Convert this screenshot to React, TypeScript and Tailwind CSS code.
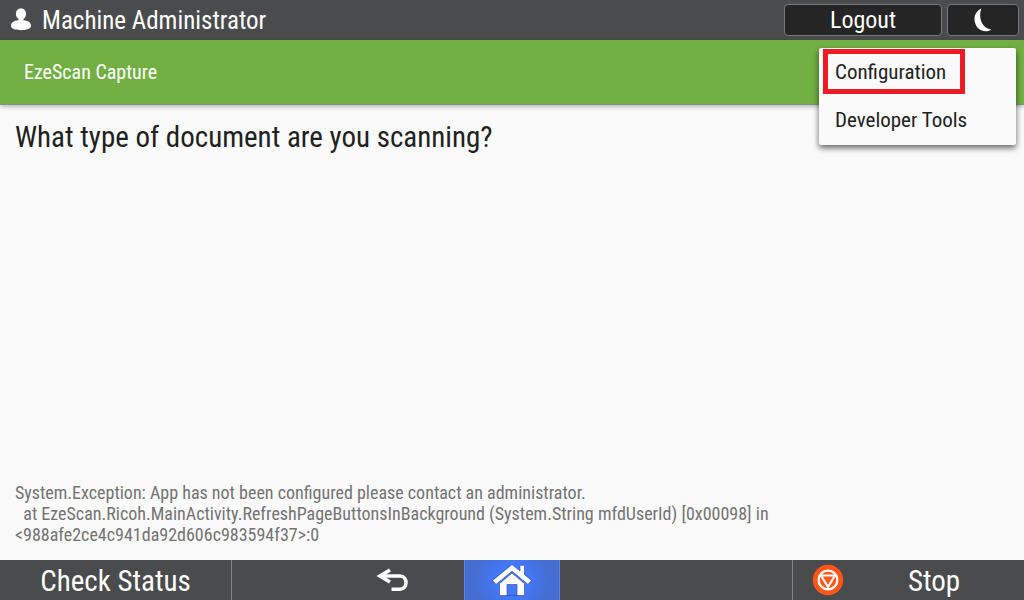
import React from "react";

const errorLines = [
  "System.Exception: App has not been configured please contact an administrator.",
  "  at EzeScan.Ricoh.MainActivity.RefreshPageButtonsInBackground (System.String mfdUserId) [0x00098] in",
  "<988afe2ce4c941da92d606c983594f37>:0",
];

function UserIcon() {
  return (
    <svg className="h-6 w-5" viewBox="0 0 20 24" fill="#ffffff" aria-hidden="true">
      <ellipse cx="10" cy="5.9" rx="5.1" ry="5.7" />
      <path d="M7.500 10h5v2.300c4.200.3 7.500 2 7.500 5.500 0 3-4.500 4.400-10 4.400S0 20.800 0 17.800c0-3.500 3.300-5.200 7.500-5.500z" />
    </svg>
  );
}

function MoonIcon() {
  return (
    <svg className="h-6 w-[18px]" viewBox="0 0 18 24" fill="#ffffff" aria-hidden="true">
      <path d="M7.500.5C3 2.500.5 6.500.5 11c0 7 4.700 12.200 11.500 12.200 2 0 4-.6 5.500-1.500-6.500-1.200-10.500-6.200-11.200-12.200C5.900 6 6.300 3 7.500.5z" />
    </svg>
  );
}

function BackIcon() {
  return (
    <svg className="h-6 w-8" viewBox="0 0 32 24" fill="none" stroke="#ffffff" strokeWidth="3.600" aria-hidden="true">
      <path d="M4.500 8H24c8 0 8 13.200 0 13.200h-8.500" />
      <path d="M14 2 4 8l10 6" />
    </svg>
  );
}

function HomeIcon() {
  return (
    <svg className="h-8 w-10" viewBox="0 0 40 32" aria-hidden="true">
      <g fill="#ffffff" stroke="#2850b8" strokeWidth="0.700" strokeLinejoin="round">
        <path d="M20 9 32.500 19.500v12h-25v-12z" />
        <path d="M15 20.500h10v11H15z" fill="#4677f5" />
        <path d="M20 .5 28 7V1.300h4.500v9.400l6.900 5.700-3.400 4L20 7.300 4 20.400.6 16.400z" />
      </g>
    </svg>
  );
}

function StopIcon() {
  return (
    <svg className="h-8 w-8" viewBox="0 0 32 32" aria-hidden="true">
      <circle cx="16" cy="16" r="15.200" fill="#ff5518" />
      <g fill="none" stroke="#ffffff" strokeWidth="2.200" strokeLinejoin="round">
        <circle cx="16" cy="16" r="9.400" />
        <path d="M9 11.500h14L16 23z" />
      </g>
    </svg>
  );
}

export default function App() {
  return (
    <div className="flex min-h-screen flex-col bg-[#fafafa] font-['Roboto_Condensed','Roboto',sans-serif] text-[#212121]">
      <header className="flex h-10 items-center bg-[#4a4b4c] pr-[5px] pl-[11px] text-white">
        <UserIcon />
        <span className="ml-[11px] flex-1 pt-0.5 text-[25px] leading-[38px]">Machine Administrator</span>
        <button className="h-8 w-[158px] rounded-[4px] border border-[#77787a] bg-[#252525] text-2xl leading-[30px]">
          Logout
        </button>
        <button
          aria-label="Sleep"
          className="ml-[5px] flex h-8 w-[72px] items-center justify-center rounded-[4px] border border-[#77787a] bg-[#252525]"
        >
          <MoonIcon />
        </button>
      </header>

      <div className="relative flex h-[65px] items-center border-b border-[#8b8f88] bg-[#72b043] px-6 shadow-[0_2px_4px_rgba(0,0,0,0.250)]">
        <h1 className="text-xl leading-8 text-white">EzeScan Capture</h1>
        <nav className="absolute top-2 right-2 flex w-[197px] flex-col rounded-[2px] bg-[#fafafa] text-[21px] leading-8 shadow-[0_3px_6px_rgba(0,0,0,0.600)]">
          <button className="mt-px ml-1 flex h-[45px] w-[142px] items-center border-[5px] border-[#ed1c24] pl-[7px] whitespace-nowrap">
            Configuration
          </button>
          <button className="flex h-[51px] items-center pl-4 whitespace-nowrap">Developer Tools</button>
        </nav>
      </div>

      <main className="flex flex-1 flex-col justify-between px-[15px] pt-3 pb-[15px]">
        <h2 className="text-[29px] leading-10">What type of document are you scanning?</h2>
        <p className="text-lg leading-[21px] whitespace-pre-wrap text-[#737373]">{errorLines.join("\n")}</p>
      </main>

      <footer className="flex h-10 items-stretch bg-[#4a4b4c] text-[29px] leading-[38px] text-white">
        <button className="w-[232px] border-r border-[#808182] pt-0.5">Check Status</button>
        <div className="grid flex-1 grid-cols-[1fr_96px_1fr]">
          <button aria-label="Back" className="flex items-center justify-end pr-14">
            <BackIcon />
          </button>
          <button
            aria-label="Home"
            className="flex items-center justify-center border-x border-[#5c84e6] bg-[radial-gradient(circle,#3f7bff_0%,#4477f5_35%,#456dd2_75%)]"
          >
            <HomeIcon />
          </button>
        </div>
        <button className="flex w-[232px] items-center border-l border-[#808182] pl-[19px]">
          <StopIcon />
          <span className="flex-1 pt-0.5">Stop</span>
        </button>
      </footer>
    </div>
  );
}
